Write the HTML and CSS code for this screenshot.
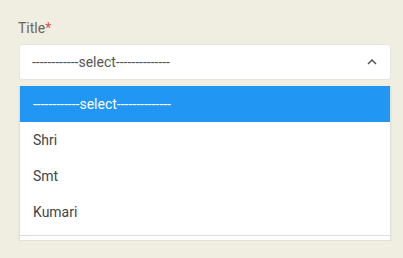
FILE: index.html
```html
<!DOCTYPE html>
<html lang="en">
<head>
  <meta charset="UTF-8">
  <meta name="viewport" content="width=device-width, initial-scale=1.0">
  <title>Title Select</title>
  <link rel="stylesheet" href="styles.css">
</head>
<body>

  <div class="container">
    <label class="field-label">Title<span class="req">*</span></label>

    <!-- Select box (open) -->
    <div class="select-box">
      <span class="select-value">------------select--------------</span>
      <svg class="caret" width="10" height="6" viewBox="0 0 10 6">
        <path d="M1 5 L5 1 L9 5" fill="none" stroke="#555" stroke-width="1.5"/>
      </svg>
    </div>

    <!-- Dropdown list -->
    <ul class="options">
      <li class="option active">------------select--------------</li>
      <li class="option">Shri</li>
      <li class="option">Smt</li>
      <li class="option">Kumari</li>
      <li class="option-footer"></li>
    </ul>
  </div>

</body>
</html>
```

FILE: styles.css
```css
body {
  font-family: Roboto, Arial, sans-serif;
  margin: 0;
  padding: 0;
  background-color: #f0eee0;
}
.container {
  padding: 19px 12px 0 18px;
}
.field-label {
  display: block;
  font-size: 14px;
  color: #6d665c;
  margin-bottom: 7px;
  line-height: 18px;
}
.req {
  color: #d9534f;
}
.select-box {
  display: flex;
  align-items: center;
  justify-content: space-between;
  height: 36px;
  margin-left: 1px;
  padding: 0 13px 0 12px;
  background: #fff;
  border: 1px solid #e6e4dc;
  border-radius: 3px;
  box-sizing: border-box;
  width: 372px;
}
.select-value {
  font-size: 14px;
  color: #555;
}
.options {
  list-style: none;
  margin: 6px 0 0 1px;
  padding: 0;
  width: 372px;
  background: #fff;
  border: 1px solid #e2e0d8;
  border-top: none;
  box-sizing: border-box;
  box-shadow: 0 1px 2px rgba(0, 0, 0, 0.08);
}
.option {
  height: 36px;
  line-height: 37px;
  padding-left: 13px;
  font-size: 14px;
  color: #444;
}
.option.active {
  background: #2196f3;
  color: #fff;
  line-height: 36px;
}
.option-footer {
  height: 4px;
  border-top: 1px solid #dcdcdc;
  margin-top: 5px;
}
```
